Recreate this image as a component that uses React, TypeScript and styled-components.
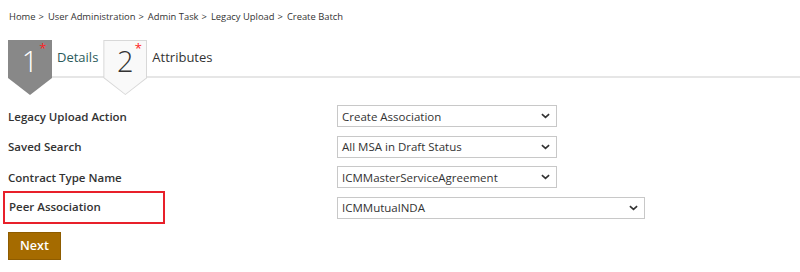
import React from "react";
import styled, { createGlobalStyle } from "styled-components";

const GlobalStyle = createGlobalStyle`
  html, body {
    margin: 0;
    padding: 0;
    background: #fff;
    font-family: "Open Sans", "Liberation Sans", sans-serif;
    color: #333;
  }
`;

const crumbs = ["Home", "User Administration", "Admin Task", "Legacy Upload", "Create Batch"];

const fields = [
  { label: "Legacy Upload Action", value: "Create Association", wide: false, flagged: false },
  { label: "Saved Search", value: "All MSA in Draft Status", wide: false, flagged: false },
  { label: "Contract Type Name", value: "ICMMasterServiceAgreement", wide: false, flagged: false },
  { label: "Peer Association", value: "ICMMutualNDA", wide: true, flagged: true },
];

export default function App() {
  return (
    <Page>
      <GlobalStyle />
      <Breadcrumb>
        {crumbs.map((c, i) => (
          <Crumb key={c}>
            {c}
            {i < crumbs.length - 1 && <Sep>&gt;</Sep>}
          </Crumb>
        ))}
      </Breadcrumb>

      <TabBar>
        <Step>
          <Badge $active>
            <BadgeFill $active>
              <Num $active>1</Num>
              <Star>*</Star>
            </BadgeFill>
          </Badge>
          <StepTitle $active>Details</StepTitle>
        </Step>
        <Step>
          <Badge>
            <BadgeFill>
              <Num>2</Num>
              <Star>*</Star>
            </BadgeFill>
          </Badge>
          <StepTitle>Attributes</StepTitle>
        </Step>
      </TabBar>

      <Form>
        {fields.map((f) => (
          <Row key={f.label}>
            <Label $flagged={f.flagged}>{f.label}</Label>
            <Select $wide={f.wide}>
              <span>{f.value}</span>
              <Chevron viewBox="0 0 10 6">
                <path d="M1 1 L5 4.6 L9 1" fill="none" stroke="#333" strokeWidth="1.8" />
              </Chevron>
            </Select>
          </Row>
        ))}
      </Form>

      <NextButton type="button">Next</NextButton>
    </Page>
  );
}

const Page = styled.div`
  width: 800px;
  height: 272px;
  padding: 10px 0 0 0;
  box-sizing: border-box;
  overflow: hidden;
`;

const Breadcrumb = styled.div`
  display: flex;
  padding-left: 9px;
  font-size: 9.4px;
  line-height: 14px;
  color: #333;
`;

const Crumb = styled.span`
  white-space: pre;
`;

const Sep = styled.span`
  margin: 0 4px 0 3px;
`;

const TabBar = styled.div`
  display: flex;
  align-items: flex-start;
  height: 36px;
  margin: 16px 0 0 8px;
  border-bottom: 2px solid #e6e6e6;
`;

const Step = styled.div`
  display: flex;
  align-items: flex-start;
  height: 55px;
`;

const Badge = styled.div<{ $active?: boolean }>`
  width: 44px;
  height: 55px;
  padding: 1px;
  box-sizing: border-box;
  background: ${(p) => (p.$active ? "#888" : "#d8d8d8")};
  clip-path: polygon(0 0, 100% 0, 100% 69%, 50% 100%, 0 69%);
`;

const BadgeFill = styled.div<{ $active?: boolean }>`
  display: flex;
  justify-content: center;
  height: 100%;
  background: ${(p) => (p.$active ? "#888" : "#f9f9f9")};
  clip-path: polygon(0 0, 100% 0, 100% 69%, 50% 100%, 0 69%);
`;

const Num = styled.span<{ $active?: boolean }>`
  font-size: 29px;
  font-weight: 300;
  line-height: 34px;
  margin-top: 3px;
  color: ${(p) => (p.$active ? "#fff" : "#333")};
`;

const Star = styled.span`
  display: inline-block;
  width: 0;
  overflow: visible;
  color: #f22;
  font-size: 13px;
  line-height: 13px;
  margin-top: 1px;
  text-indent: 1px;
`;

const StepTitle = styled.span<{ $active?: boolean }>`
  font-size: 13px;
  line-height: 18px;
  margin: 8px 5px 0 5px;
  color: ${(p) => (p.$active ? "#2b5b5b" : "#333")};
`;

const Form = styled.div`
  display: flex;
  flex-direction: column;
  gap: 8.5px;
  margin-top: 27px;
`;

const Row = styled.div`
  display: grid;
  grid-template-columns: 337px auto;
  grid-template-rows: 22px;
  align-items: center;
`;

const Label = styled.div<{ $flagged?: boolean }>`
  justify-self: start;
  box-sizing: border-box;
  font-size: 11.5px;
  font-weight: 600;
  color: #333;
  ${(p) =>
    p.$flagged
      ? `
    border: 2px solid #e8202a;
    margin-left: 3px;
    width: 162px;
    height: 33px;
    padding: 6px 0 0 4px;
  `
      : `
    padding-left: 8px;
  `}
`;

const Select = styled.div<{ $wide?: boolean }>`
  display: flex;
  align-items: center;
  justify-content: space-between;
  box-sizing: border-box;
  width: ${(p) => (p.$wide ? "308px" : "220px")};
  height: 22px;
  padding: 0 6px 0 4px;
  border: 1px solid #c8c8c8;
  background: #fff;
  font-size: 11.5px;
  color: #333;
`;

const Chevron = styled.svg`
  width: 9px;
  height: 6px;
`;

const NextButton = styled.button`
  display: block;
  margin: 13px 0 0 8px;
  width: 53px;
  height: 28px;
  padding: 0;
  background: #a56b00;
  border: 1px solid #8e5c00;
  color: #fff;
  font-family: "Open Sans", "Liberation Sans", sans-serif;
  font-size: 12.5px;
  font-weight: 600;
  cursor: pointer;
`;
